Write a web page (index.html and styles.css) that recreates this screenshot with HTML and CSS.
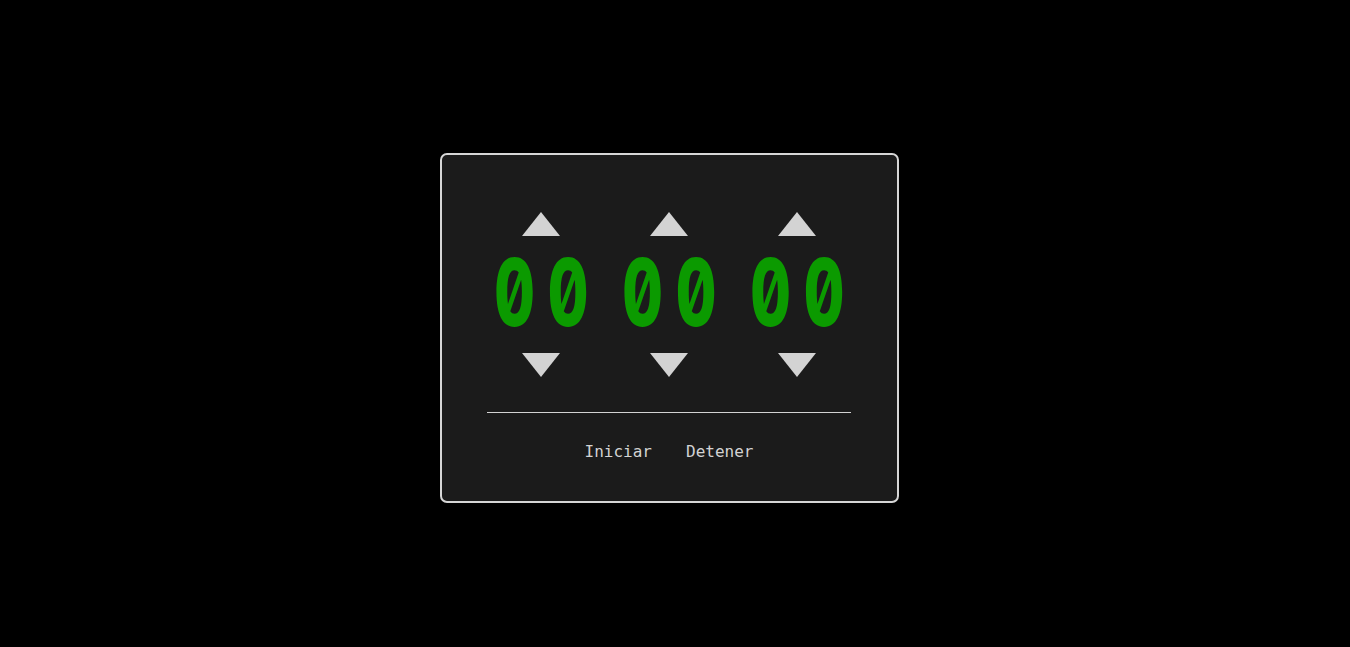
FILE: index.html
```html
<!DOCTYPE html>
<html lang="es">
<head>
<meta charset="utf-8">
<title>Temporizador</title>
<link rel="stylesheet" href="styles.css">
</head>
<body>
<main class="stage">
  <section class="timer">
    <div class="units">
      <div class="unit">
        <button class="arrow arrow-up" aria-label="Aumentar horas"></button>
        <div class="digits"><span class="num">00</span></div>
        <button class="arrow arrow-down" aria-label="Disminuir horas"></button>
      </div>
      <div class="unit">
        <button class="arrow arrow-up" aria-label="Aumentar minutos"></button>
        <div class="digits"><span class="num">00</span></div>
        <button class="arrow arrow-down" aria-label="Disminuir minutos"></button>
      </div>
      <div class="unit">
        <button class="arrow arrow-up" aria-label="Aumentar segundos"></button>
        <div class="digits"><span class="num">00</span></div>
        <button class="arrow arrow-down" aria-label="Disminuir segundos"></button>
      </div>
    </div>
    <hr class="divider">
    <div class="controls">
      <button class="btn">Iniciar</button>
      <button class="btn">Detener</button>
    </div>
  </section>
</main>
</body>
</html>
```
FILE: styles.css
```css
* { box-sizing: border-box; }
html, body {
  margin: 0;
  padding: 0;
  background: #000;
}
.stage {
  min-height: 647px;
  display: flex;
  justify-content: center;
  align-items: flex-start;
  padding-top: 153px;
  padding-right: 12px;
}
.timer {
  width: 459px;
  height: 350px;
  background: #1b1b1b;
  border: 2px solid #d6d6d6;
  border-radius: 7px;
  padding: 57px 46px 0 46px;
  display: flex;
  flex-direction: column;
  align-items: center;
}
.units {
  display: flex;
  justify-content: center;
}
.unit {
  width: 128px;
  display: flex;
  flex-direction: column;
  align-items: center;
}
.arrow {
  width: 38px;
  height: 24px;
  padding: 0;
  margin: 0;
  border: 0;
  background: #d3d3d3;
  cursor: pointer;
}
.arrow-up { clip-path: polygon(50% 0, 100% 100%, 0 100%); }
.arrow-down { clip-path: polygon(0 0, 100% 0, 50% 100%); }
.digits {
  height: 117px;
  width: 128px;
  display: flex;
  justify-content: center;
  overflow: visible;
}
.num {
  display: block;
  font-family: Inter, "DejaVu Sans", sans-serif;
  font-weight: 800;
  font-feature-settings: "zero" 1, "tnum" 1;
  font-size: 94px;
  line-height: 112px;
  letter-spacing: 19px;
  margin-right: -13px;
  color: #0b9a00;
  white-space: nowrap;
  transform: scaleX(0.67);
}
.divider {
  width: 364px;
  margin: 35px 0 0 0;
  border: 0;
  border-top: 1px solid #d3d3d3;
  height: 0;
}
.controls {
  margin-top: 29px;
  display: flex;
  gap: 18px;
}
.btn {
  background: transparent;
  border: 0;
  color: #d3d3d3;
  font-family: "DejaVu Sans Mono", monospace;
  font-size: 16px;
  line-height: 20px;
  padding: 0 8px;
  cursor: pointer;
}
```
